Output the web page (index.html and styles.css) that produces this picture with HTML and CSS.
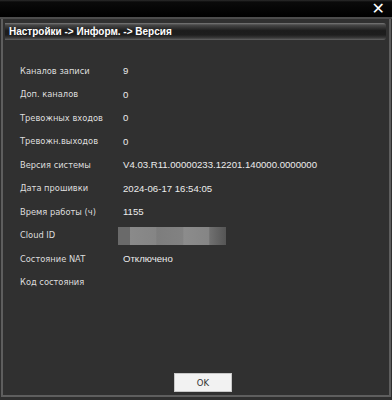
FILE: index.html
```html
<!DOCTYPE html>
<html lang="ru">
<head>
    <meta charset="UTF-8">
    <title>Версия</title>
    <link rel="stylesheet" href="styles.css">
</head>
<body>
    <div class="window">
        <div class="titlebar">
            <span class="close">&#x2715;</span>
        </div>
        <div class="frame">
            <div class="crumbs">Настройки -&gt; Информ. -&gt; Версия</div>
            <div class="info">
                <div class="row"><span class="label">Каналов записи</span><span class="value">9</span></div>
                <div class="row"><span class="label">Доп. каналов</span><span class="value">0</span></div>
                <div class="row"><span class="label">Тревожных входов</span><span class="value">0</span></div>
                <div class="row"><span class="label">Тревожн.выходов</span><span class="value">0</span></div>
                <div class="row"><span class="label">Версия системы</span><span class="value">V4.03.R11.00000233.12201.140000.0000000</span></div>
                <div class="row"><span class="label">Дата прошивки</span><span class="value">2024-06-17 16:54:05</span></div>
                <div class="row"><span class="label">Время работы (ч)</span><span class="value">1155</span></div>
                <div class="row"><span class="label">Cloud ID</span><span class="value"><span class="blur"></span></span></div>
                <div class="row"><span class="label">Состояние NAT</span><span class="value">Отключено</span></div>
                <div class="row"><span class="label">Код состояния</span><span class="value"></span></div>
            </div>
            <div class="footer">
                <button class="ok">OK</button>
            </div>
        </div>
    </div>
</body>
</html>
```

FILE: styles.css
```css
body {
    margin: 0;
    padding: 0;
    background-color: #2f2f2f;
    font-family: "DejaVu Sans", Tahoma, sans-serif;
    color: #e8e8e8;
}
.window {
    width: 392px;
    height: 400px;
    display: flex;
    flex-direction: column;
    box-sizing: border-box;
    overflow: hidden;
}
.titlebar {
    height: 17px;
    background: linear-gradient(#2c2c2c 0, #0a0a0a 2px, #000 100%);
    border-bottom: 2px solid #4c4c4c;
    display: flex;
    justify-content: flex-end;
    align-items: center;
    padding-right: 7px;
}
.close {
    color: #fff;
    font-family: "DejaVu Sans", sans-serif;
    font-size: 16px;
    font-weight: bold;
    line-height: 17px;
}
.frame {
    flex: 1;
    display: flex;
    flex-direction: column;
    margin: 0 1px 3px 1px;
    border-left: 2px solid #5e5e5e;
    border-right: 2px solid #5e5e5e;
    border-bottom: 2px solid #5e5e5e;
    background-color: #303030;
}
.crumbs {
    margin: 4px 3px 0 2px;
    height: 17px;
    line-height: 17px;
    padding-left: 4px;
    background: linear-gradient(#7a7a7a 0, #474747 2px, #1c1c1c 45%, #1e1e1e 70%, #3a3a3a 88%, #666 100%);
    border-radius: 0 3px 3px 0;
    color: #fff;
    font-family: "Liberation Sans", Arial, sans-serif;
    font-weight: bold;
    font-size: 10px;
}
.info {
    padding: 19px 0 0 17px;
}
.row {
    display: flex;
    height: 23.5px;
    align-items: center;
    font-size: 8.3px;
}
.label {
    width: 103px;
    color: #dedede;
}
.value {
    color: #ececec;
    font-family: "Liberation Sans", Arial, sans-serif;
    font-size: 9.6px;
}
.blur {
    display: block;
    width: 108px;
    height: 18px;
    margin-left: -5px;
    margin-top: 2px;
    background: linear-gradient(90deg, #6a6a6a 0, #6a6a6a 11%, #8a8a8a 11%, #858585 35%, #7d7d7d 36%, #828282 60%, #8c8c8c 61%, #858585 84%, #707070 85%, #555 100%);
}
.footer {
    margin-top: auto;
    display: flex;
    justify-content: center;
    padding: 0 0 3px 14px;
}
.ok {
    width: 58px;
    height: 19px;
    background-color: #f2f2f2;
    border: 1px solid #c8c8c8;
    color: #333;
    font-family: "DejaVu Sans", sans-serif;
    font-size: 8.5px;
    padding: 0;
}
```
